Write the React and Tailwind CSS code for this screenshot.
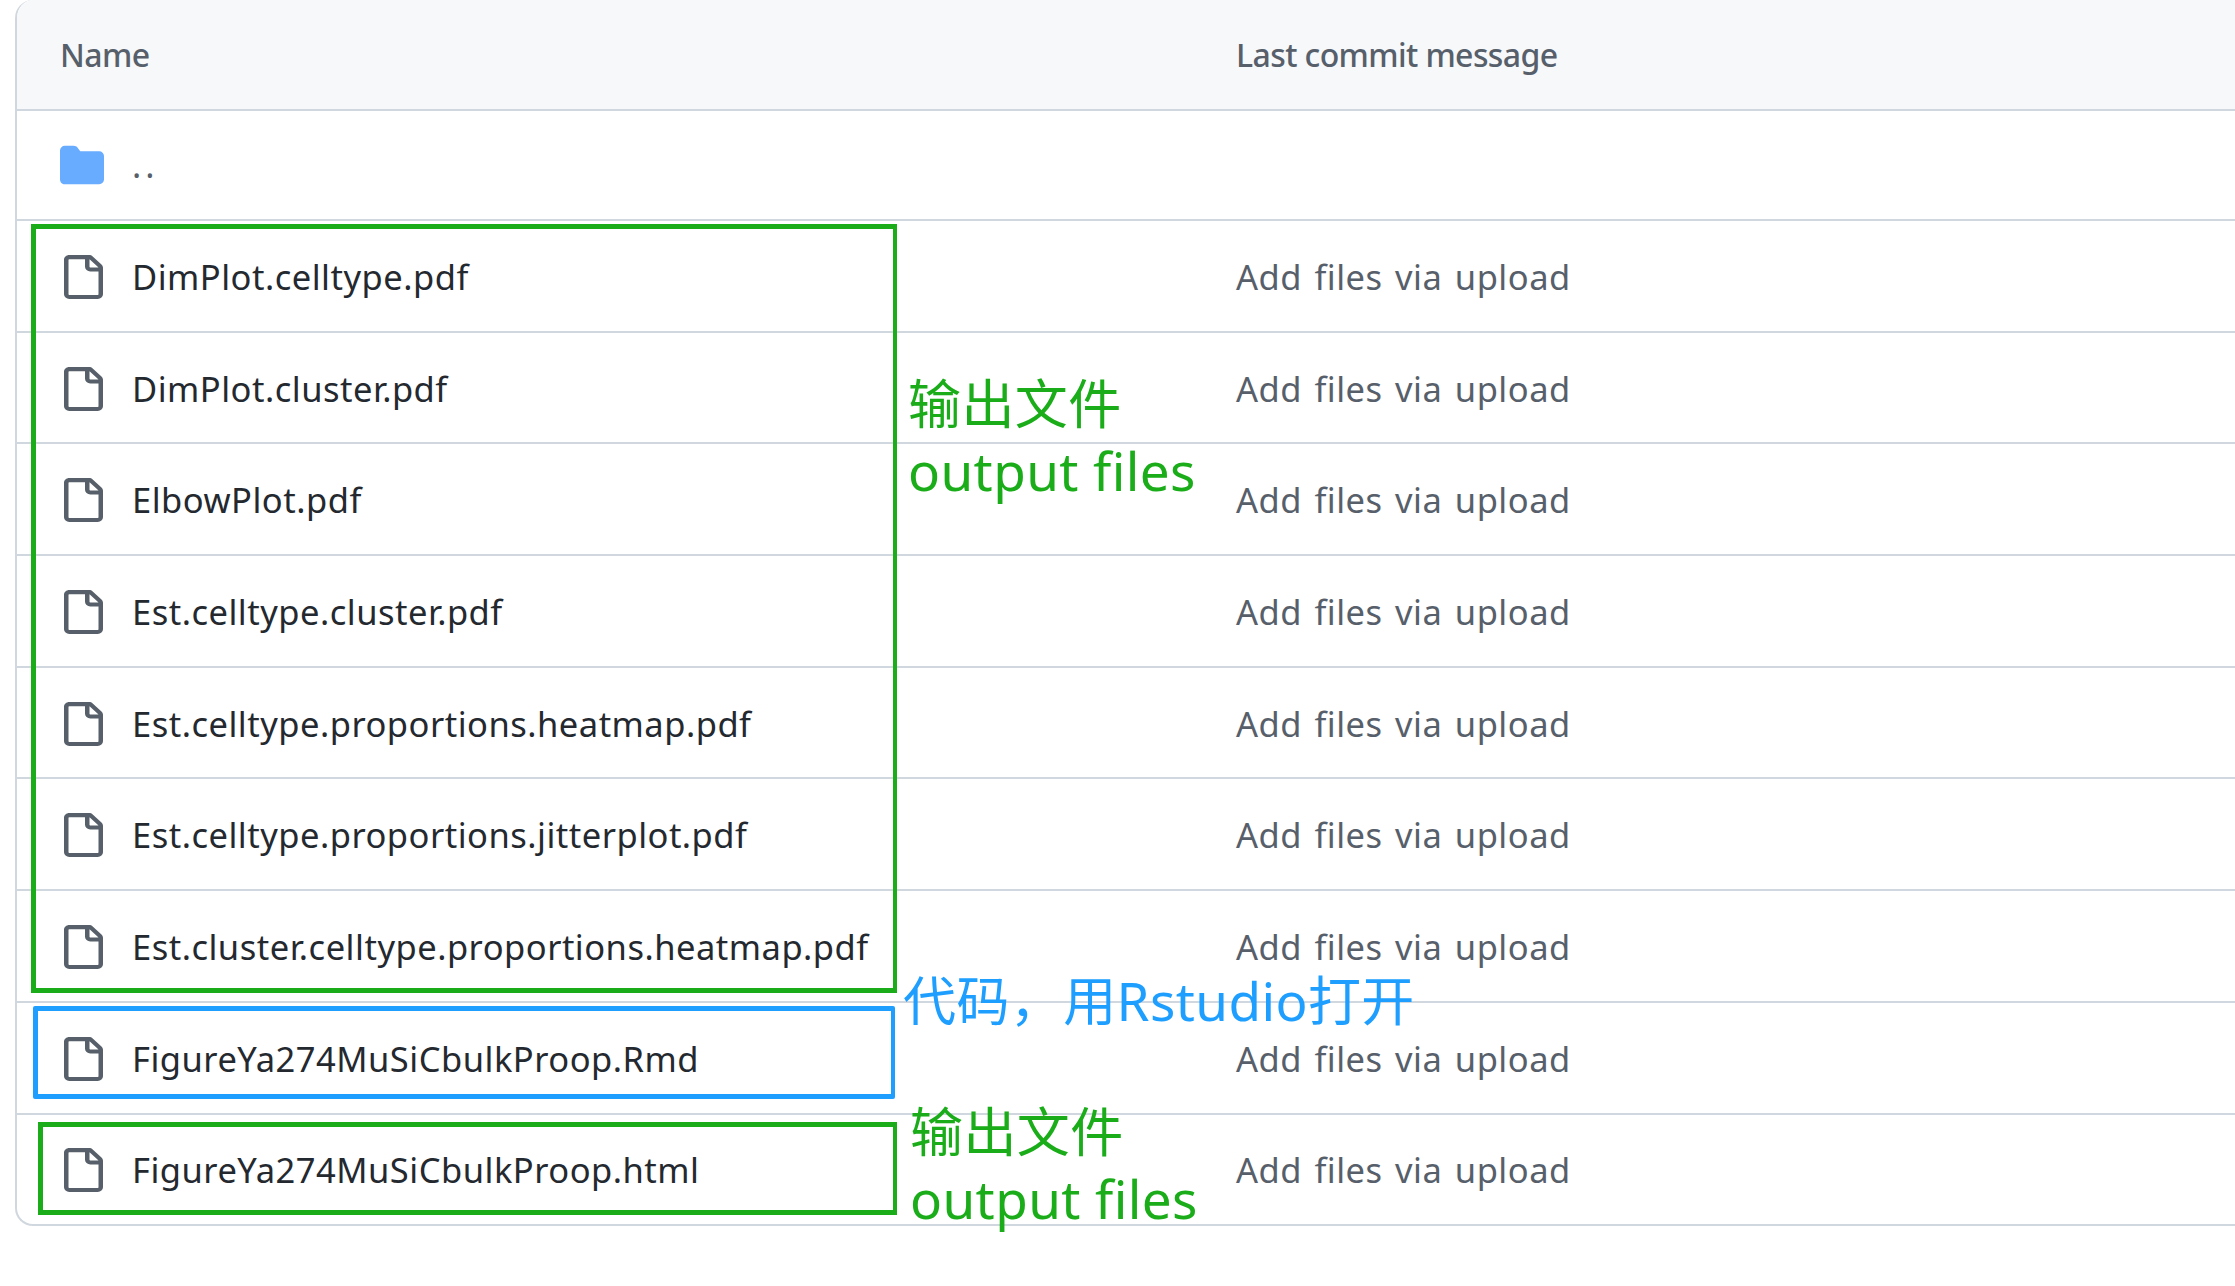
const files = [
  'DimPlot.celltype.pdf',
  'DimPlot.cluster.pdf',
  'ElbowPlot.pdf',
  'Est.celltype.cluster.pdf',
  'Est.celltype.proportions.heatmap.pdf',
  'Est.celltype.proportions.jitterplot.pdf',
  'Est.cluster.celltype.proportions.heatmap.pdf',
  'FigureYa274MuSiCbulkProop.Rmd',
  'FigureYa274MuSiCbulkProop.html',
];

function FileIcon() {
  return (
    <svg viewBox="0 0 16 16" preserveAspectRatio="none" className="h-[44px] w-[48px] shrink-0 fill-[#57606a]">
      <path d="M2 1.75C2 .784 2.784 0 3.75 0h6.586c.464 0 .909.184 1.237.513l2.914 2.914c.329.328.513.773.513 1.237v9.586A1.75 1.75 0 0 1 13.25 16h-9.5A1.75 1.75 0 0 1 2 14.25Zm1.75-.25a.25.25 0 0 0-.25.25v12.5c0 .138.112.25.25.25h9.5a.25.25 0 0 0 .25-.25V6h-2.75A1.75 1.75 0 0 1 9 4.25V1.5Zm6.75.062V4.25c0 .138.112.25.25.25h2.688l-.011-.013-2.914-2.914-.013-.011Z" />
    </svg>
  );
}

function FolderIcon() {
  return (
    <svg viewBox="0 0 16 16" preserveAspectRatio="none" className="h-[44px] w-[44px] shrink-0 fill-[#68acff]">
      <path d="M1.75 1A1.75 1.75 0 0 0 0 2.75v10.5C0 14.216.784 15 1.75 15h12.5A1.75 1.75 0 0 0 16 13.25v-8.5A1.75 1.75 0 0 0 14.25 3H7.5a.25.25 0 0 1-.2-.1l-.9-1.2C6.07 1.26 5.55 1 5 1H1.75Z" />
    </svg>
  );
}

function Row({ name }) {
  return (
    <div className="flex h-[111.7px] items-center border-t-2 border-[#d0d7de] pt-[2px]">
      <div className="flex w-[1219px] shrink-0 items-center gap-[26px] pl-[41px]">
        <FileIcon />
        <span className="text-[#24292f]">{name}</span>
      </div>
      <span className="text-[#57606a] [word-spacing:3px]">Add files via upload</span>
    </div>
  );
}

function Note({ className, children }) {
  return <div className={`absolute whitespace-nowrap text-[53px] leading-[67px] tracking-[0.4px] ${className}`}>{children}</div>;
}

export default function App() {
  return (
    <div className="relative h-[1286px] overflow-hidden bg-white pl-[15px] font-['Noto_Sans','Noto_Sans_CJK_SC',sans-serif] text-[34.5px] tracking-[0.5px]">
      <div className="rounded-bl-[18px] rounded-tl-[18px] border-b-2 border-l-2 border-[#d0d7de]">
        <div className="flex h-[109px] items-center rounded-tl-[18px] bg-[#f6f8fa] text-[32px] font-medium tracking-[-0.6px] text-[#57606a]">
          <span className="w-[1219px] shrink-0 pl-[43px]">Name</span>
          <span>Last commit message</span>
        </div>
        <div className="flex h-[110px] items-center gap-[28px] border-t-2 border-[#d0d7de] pl-[43px]">
          <FolderIcon />
          <span className="tracking-[4px] text-[#57606a]">..</span>
        </div>
        {files.map((name) => (
          <Row key={name} name={name} />
        ))}
      </div>

      <div className="absolute left-[31px] top-[224px] h-[769px] w-[866px] border-[5px] border-r-4 border-[#1aad19]" />
      <div className="absolute left-[33px] top-[1006px] h-[93px] w-[862px] rounded-[2px] border-[5px] border-r-4 border-[#1e9fff]" />
      <div className="absolute left-[38px] top-[1122px] h-[93px] w-[859px] border-[5px] border-r-4 border-[#1aad19]" />

      <Note className="left-[908px] top-[370px] text-[#1aad19]">
        <div>输出文件</div>
        <div>output files</div>
      </Note>
      <Note className="left-[903px] top-[967px] text-[#1e9fff]">代码，用Rstudio打开</Note>
      <Note className="left-[910px] top-[1098px] text-[#1aad19]">
        <div>输出文件</div>
        <div>output files</div>
      </Note>
    </div>
  );
}
